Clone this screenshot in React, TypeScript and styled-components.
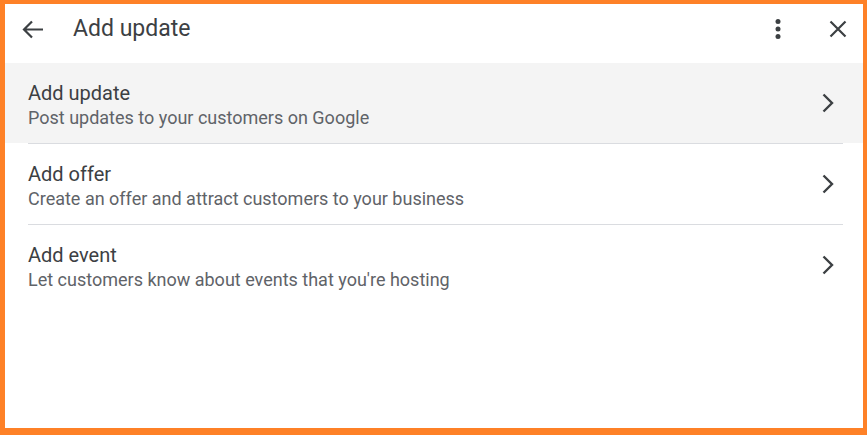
import React from "react";
import styled, { createGlobalStyle } from "styled-components";

const GlobalStyle = createGlobalStyle`
  html, body {
    margin: 0;
    padding: 0;
    background: #ffffff;
  }
  * {
    box-sizing: border-box;
  }
`;

const Frame = styled.div`
  width: 867px;
  height: 435px;
  background: #ffffff;
  border-style: solid;
  border-color: #fe8127;
  border-width: 4px 4px 7px 5px;
  font-family: Roboto, "Liberation Sans", Arial, sans-serif;
  color: #3c4043;
  display: flex;
  flex-direction: column;
`;

const Header = styled.div`
  height: 49px;
  display: flex;
  align-items: center;
  padding: 0 5px 0 8px;
`;

const IconButton = styled.button`
  width: 40px;
  height: 40px;
  padding: 0;
  border: none;
  background: transparent;
  display: flex;
  align-items: center;
  justify-content: center;
  color: #3c4043;
  cursor: pointer;
`;

const Title = styled.h1`
  margin: 0 0 0 20px;
  flex: 1;
  font-size: 23px;
  line-height: 30px;
  font-weight: 400;
  color: #3c4043;
`;

const Actions = styled.div`
  display: flex;
  align-items: center;
  gap: 20px;
`;

const List = styled.div`
  padding-top: 10px;
  display: flex;
  flex-direction: column;
`;

const Row = styled.div<{ $active?: boolean }>`
  height: 80px;
  display: flex;
  align-items: flex-start;
  padding: 18px 23px 0 23px;
  background: ${(p) => (p.$active ? "#f4f4f4" : "transparent")};
  cursor: pointer;
`;

const RowText = styled.div`
  flex: 1;
  display: flex;
  flex-direction: column;
`;

const RowTitle = styled.div`
  font-size: 20px;
  line-height: 25px;
  color: #3c4043;
`;

const RowSub = styled.div`
  font-size: 18px;
  line-height: 24px;
  color: #5f6368;
`;

const Chevron = styled.div`
  align-self: center;
  margin-top: -18px;
  display: flex;
`;

const Divider = styled.div`
  height: 1px;
  margin: 0 20px 0 23px;
  background: #dadce0;
`;

const BackIcon = () => (
  <svg width="24" height="24" viewBox="0 0 24 24" fill="none">
    <path
      d="M22 12.5H3M11 4.5L3 12.5L11 20.5"
      stroke="currentColor"
      strokeWidth="2.2"
    />
  </svg>
);

const MoreIcon = () => (
  <svg width="24" height="24" viewBox="0 0 24 24" fill="currentColor">
    <circle cx="12" cy="4.5" r="2.5" />
    <circle cx="12" cy="12" r="2.5" />
    <circle cx="12" cy="19.5" r="2.5" />
  </svg>
);

const CloseIcon = () => (
  <svg width="24" height="24" viewBox="0 0 24 24" fill="none">
    <path d="M4.5 4.5L19.5 19.5M19.5 4.5L4.5 19.5" stroke="currentColor" strokeWidth="2.2" />
  </svg>
);

const ChevronIcon = () => (
  <svg width="24" height="24" viewBox="0 0 24 24" fill="none">
    <path d="M7.5 3.5L16 12L7.5 20.5" stroke="#3c4043" strokeWidth="2.4" />
  </svg>
);

const items = [
  { title: "Add update", sub: "Post updates to your customers on Google" },
  { title: "Add offer", sub: "Create an offer and attract customers to your business" },
  { title: "Add event", sub: "Let customers know about events that you're hosting" },
];

const App: React.FC = () => {
  return (
    <>
      <GlobalStyle />
      <Frame>
        <Header>
          <IconButton aria-label="Back">
            <BackIcon />
          </IconButton>
          <Title>Add update</Title>
          <Actions>
            <IconButton aria-label="More">
              <MoreIcon />
            </IconButton>
            <IconButton aria-label="Close">
              <CloseIcon />
            </IconButton>
          </Actions>
        </Header>
        <List>
          {items.map((item, i) => (
            <React.Fragment key={item.title}>
              <Row $active={i === 0}>
                <RowText>
                  <RowTitle>{item.title}</RowTitle>
                  <RowSub>{item.sub}</RowSub>
                </RowText>
                <Chevron>
                  <ChevronIcon />
                </Chevron>
              </Row>
              {i < items.length - 1 && <Divider />}
            </React.Fragment>
          ))}
        </List>
      </Frame>
    </>
  );
};

export default App;
